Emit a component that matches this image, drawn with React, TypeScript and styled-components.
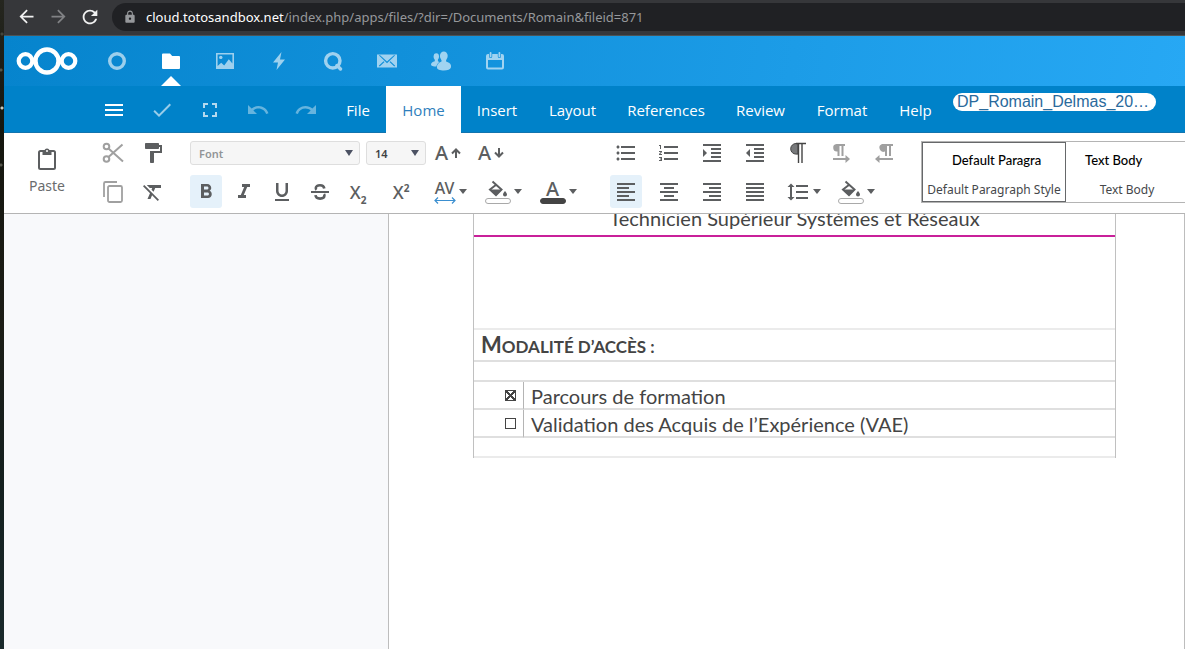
import React from "react";
import styled, { createGlobalStyle } from "styled-components";
import {
  MdArrowBack, MdArrowForward, MdRefresh, MdLock, MdMenu, MdCheck, MdUndo, MdRedo,
  MdFormatPaint, MdFormatClear, MdFormatBold, MdFormatItalic,
  MdFormatUnderlined, MdFormatListBulleted, MdFormatListNumbered,
  MdFormatIndentIncrease, MdFormatIndentDecrease, MdFormatAlignLeft, MdFormatAlignCenter,
  MdFormatAlignRight, MdFormatAlignJustify, MdFormatLineSpacing,
} from "react-icons/md";

const UI = `"Noto Sans", "Open Sans", sans-serif`;
const DOC = `Lato, "Open Sans", sans-serif`;

const GlobalStyle = createGlobalStyle`
  *, *::before, *::after { box-sizing: border-box; }
  html, body, #root { height: 100%; }
  body { margin: 0; background: #fff; font-family: ${UI}; overflow: hidden; }
  button, select, input { font: inherit; margin: 0; }
  button { border: 0; padding: 0; background: none; color: inherit; }
  svg { display: block; flex: none; }
`;

const Screen = styled.div`
  display: flex;
  min-height: 100%;
`;

const DesktopEdge = styled.div`
  flex: none;
  width: 4px;
  background:
    radial-gradient(circle at 2px 108px, #c9c9bd 0 1px, transparent 2px),
    radial-gradient(circle at 1px 70px, #54554a 0 1px, transparent 2px),
    radial-gradient(circle at 2px 34px, #44453c 0 1px, transparent 2px),
    radial-gradient(circle at 1px 165px, #55564c 0 1px, transparent 2px),
    linear-gradient(#25261f, #15160f 20%, #1c1d16 50%, #14201f 75%, #1a2a2c);
`;

const Window = styled.div`
  flex: 1;
  min-width: 0;
  display: flex;
  flex-direction: column;
  height: 100vh;
`;

const BrowserBar = styled.div`
  display: flex;
  align-items: center;
  height: 36px;
  padding: 3px 0 5px 6px;
  background: #36373a;
  border-bottom: 1px solid #4d5356;
  overflow: hidden;
`;

const BrowserButton = styled.button<{ $dim?: boolean }>`
  display: grid;
  place-items: center;
  width: 32px;
  height: 28px;
  color: ${(p) => (p.$dim ? "#818285" : "#f1f1f1")};
`;

const AddressBar = styled.label`
  flex: 1;
  display: flex;
  align-items: center;
  gap: 9px;
  height: 28px;
  margin-left: 6px;
  padding-left: 11px;
  border-radius: 14px 0 0 14px;
  background: #202124;
  color: #96989b;
  font-size: 13px;
  line-height: 28px;
  white-space: nowrap;
`;

const Host = styled.span`
  color: #fff;
`;

const AppHeader = styled.header`
  flex: none;
  display: flex;
  align-items: center;
  height: 50px;
  padding-left: 12px;
  background: linear-gradient(100deg, #0684cd, #27a8f4);
`;

const Logo = styled.a`
  display: block;
  width: 74px;
`;

const AppLink = styled.a<{ $active?: boolean }>`
  position: relative;
  display: grid;
  place-items: center;
  width: 54px;
  height: 50px;
  color: #fff;
  svg { opacity: ${(p) => (p.$active ? 1 : 0.6)}; }
  &::after {
    content: "";
    display: ${(p) => (p.$active ? "block" : "none")};
    position: absolute;
    bottom: 0;
    left: 17px;
    border: 10px solid transparent;
    border-top-width: 0;
    border-bottom-color: #fff;
  }
`;

const MenuBar = styled.nav`
  flex: none;
  display: flex;
  height: 47px;
  padding-left: 86px;
  background: #0082c9;
  box-shadow: inset 0 -1px #1274ae;
`;

const MenuIcon = styled.button<{ $fade?: number }>`
  display: grid;
  place-items: center;
  width: 48px;
  color: #fff;
  svg { opacity: ${(p) => p.$fade ?? 1}; }
`;

const Tab = styled.button<{ $active?: boolean; $w: number }>`
  width: ${(p) => p.$w}px;
  text-align: center;
  white-space: nowrap;
  font-family: "Open Sans", ${UI};
  font-size: 15px;
  line-height: 20px;
  color: ${(p) => (p.$active ? "#2f7fbd" : "#fff")};
  background: ${(p) => (p.$active ? "#fff" : "transparent")};
`;

const FileName = styled.input`
  width: 203px;
  height: 18px;
  margin: 7px 0 0 5px;
  padding: 0 4px;
  border: 0;
  border-radius: 9px;
  background: #fff;
  color: #2a6a9c;
  font-family: "Liberation Sans", sans-serif;
  font-size: 16px;
  line-height: 18px;
  text-overflow: ellipsis;
`;

const Toolbar = styled.div`
  flex: none;
  display: flex;
  height: 81px;
  padding-top: 8px;
  background: #fff;
  border-bottom: 1px solid #b4b4b4;
  color: #5c5e60;
  overflow: hidden;
`;

const PasteButton = styled.button`
  display: flex;
  flex-direction: column;
  align-items: center;
  width: 86px;
  padding-top: 6px;
  height: 64px;
  gap: 5px;
  font-size: 14px;
  line-height: 20px;
  color: #6a6c6e;
`;

const Group = styled.div<{ $w: number }>`
  flex: none;
  width: ${(p) => p.$w}px;
  display: flex;
  flex-direction: column;
  gap: 10px;
`;

const Row = styled.div<{ $gap: number }>`
  display: flex;
  align-items: center;
  gap: ${(p) => p.$gap}px;
  & > * { flex: none; }
  &:first-child { height: 24px; }
  &:last-child { height: 33px; }
`;

const Tool = styled.button<{ $w?: number; $on?: boolean; $dim?: boolean }>`
  display: flex;
  align-items: center;
  justify-content: center;
  gap: 3px;
  width: ${(p) => p.$w ?? 32}px;
  height: 100%;
  border-radius: 3px;
  background: ${(p) => (p.$on ? "#e5f1fa" : "transparent")};
  color: ${(p) => (p.$dim ? "#a0a0a0" : "#5c5e60")};
`;

const Glyph = styled.span<{ $size?: number }>`
  font-size: ${(p) => p.$size ?? 18}px;
  font-weight: 500;
  line-height: 18px;
  sub, sup { font-size: 10px; line-height: 0; font-weight: 700; }
`;

const Stack = styled.span`
  display: flex;
  flex-direction: column;
  align-items: center;
`;

const ColorBar = styled.span<{ $fill: string }>`
  width: 26px;
  height: 6px;
  border-radius: 3px;
  border: 1px solid ${(p) => (p.$fill === "#fff" ? "#a9a9a9" : p.$fill)};
  background: ${(p) => p.$fill};
`;

const SelectBox = styled.span<{ $w: number; $strong?: boolean }>`
  display: grid;
  align-items: center;
  width: ${(p) => p.$w}px;
  & > * { grid-area: 1 / 1; }
  & > svg { justify-self: end; margin-right: 7px; pointer-events: none; }
  select {
    appearance: none;
    width: 100%;
    height: 24px;
    padding: 0 8px;
    border: 1px solid #dedede;
    border-radius: 3px;
    background: #f6f6f6;
    color: ${(p) => (p.$strong ? "#3f4144" : "#929497")};
    font-size: 11px;
    font-weight: 600;
    opacity: 1;
  }
`;

const Styles = styled.div`
  flex: 1;
  min-width: 0;
  display: flex;
  height: 62px;
  border: 1px solid #b4b4b4;
  border-right: 0;
  background: #fff;
  overflow: hidden;
`;

const StyleCard = styled.button<{ $w: number; $on?: boolean; $indent: number }>`
  flex: none;
  display: flex;
  flex-direction: column;
  gap: 12px;
  width: ${(p) => p.$w}px;
  padding-top: 9px;
  box-shadow: ${(p) => (p.$on ? "inset 0 0 0 1px #66686a" : "none")};
  white-space: nowrap;
  font-size: 12px;
  line-height: 18px;
  color: #45474a;
  strong {
    align-self: flex-start;
    padding-left: ${(p) => p.$indent}px;
    font-family: ${DOC};
    font-size: 13px;
    font-weight: 500;
    color: #000;
  }
  span { align-self: center; }
`;

const Canvas = styled.main`
  flex: 1;
  min-height: 0;
  display: flex;
  padding-left: 384px;
  background: #f8f9fb;
  overflow: hidden;
`;

const Page = styled.section`
  flex: 1;
  padding: 0 68px 0 84px;
  border: solid #bdbdbd;
  border-width: 0 1px;
  background: #fff;
  color: #444;
  font-family: ${DOC};
`;

const Sheet = styled.table`
  width: 100%;
  margin-top: -8px;
  border-spacing: 0;
  border: solid #c0c0c0;
  border-width: 0 1px;
  font-size: 20px;
  line-height: 24px;
  td, th { padding: 0; border-bottom: 2px solid #dfdfdf; }
`;

const Line = styled.tr<{ $h: number; $soft?: boolean }>`
  height: ${(p) => p.$h}px;
  && > td { ${(p) => (p.$soft ? "border-bottom-color: #ebebeb;" : "")} }
`;

const TitleCell = styled.td`
  &&& { border-bottom: 2px solid #c9209a; }
  text-align: center;
  vertical-align: top;
`;

const Heading = styled.th`
  &&& { padding: 2px 0 0 7px; }
  text-align: left;
  text-transform: uppercase;
  font-size: 17px;
  font-weight: 700;
  &::first-letter { font-size: 22px; }
`;

const TickCell = styled.td`
  width: 50px;
  &&& { border-right: 1px solid #b4b4b4; padding-right: 7px; }
  text-align: right;
`;

const TextCell = styled.td`
  &&& { padding: 2px 0 0 7px; }
`;

const Tick = styled.input`
  appearance: none;
  display: block;
  && { margin: 0 0 0 auto; }
  width: 11px;
  height: 11px;
  border: 1px solid #444;
  &:checked {
    background:
      linear-gradient(45deg, transparent 44%, #444 44% 56%, transparent 56%),
      linear-gradient(-45deg, transparent 44%, #444 44% 56%, transparent 56%);
  }
`;

const Caret = () => (
  <svg width="8" height="5" viewBox="0 0 8 5" fill="currentColor"><path d="M0 0h8L4 5z" /></svg>
);
const SelectCaret = () => (
  <svg width="8" height="6" viewBox="0 0 8 6" fill="#4c5263"><path d="M0 0h8L4 6z" /></svg>
);

const CloudLogo = () => (
  <svg width="62" height="30" viewBox="0 0 62 30" fill="none" stroke="#fff">
    <circle cx="31" cy="15" r="11.5" strokeWidth="4.4" />
    <circle cx="9.5" cy="15" r="6.8" strokeWidth="4.2" />
    <circle cx="52.5" cy="15" r="6.8" strokeWidth="4.2" />
  </svg>
);

const appIcons: { name: string; active?: boolean; icon: React.ReactNode }[] = [
  { name: "Dashboard", icon: <svg width="20" height="20" fill="none" stroke="currentColor" strokeWidth="3.4"><circle cx="10" cy="10" r="7.3" /></svg> },
  { name: "Files", active: true, icon: <svg width="20" height="20" fill="currentColor"><path d="M2 2.5h7l2.2 2.4H18a1 1 0 0 1 1 1v11a1 1 0 0 1-1 1H2a1 1 0 0 1-1-1v-13.400a1 1 0 0 1 1-1z" /></svg> },
  { name: "Photos", icon: <svg width="20" height="20" fill="currentColor" fillRule="evenodd"><path d="M1 2h18v16H1zM2.600 3.600v11.400l3.600-3.200 3 2.600 4.600-6.200 3.600 4.400v-9z" /><circle cx="5.800" cy="6.400" r="1.700" /></svg> },
  { name: "Activity", icon: <svg width="20" height="20" fill="currentColor"><path d="M12.500 1 4 11.500h5L7.500 19 16 8.500h-5z" /></svg> },
  { name: "Talk", icon: <svg width="20" height="20" fill="none" stroke="currentColor"><circle cx="9.800" cy="9.800" r="7.200" strokeWidth="3.400" /><path d="M14 14.500 17.500 18" strokeWidth="3.400" strokeLinecap="round" /></svg> },
  { name: "Mail", icon: <svg width="20" height="20"><path fill="currentColor" fillRule="evenodd" d="M0 3.500h20v13H0zM2 4.500l8 7.800 8-7.800-.8-.5L10 10.600 2.800 4zM1.800 14.800l.9.800L7.500 11l-.9-.8zM18.200 14.800l-.9.800L12.500 11l.9-.8z" /></svg> },
  { name: "Contacts", icon: <svg width="20" height="20" fill="currentColor"><ellipse cx="12.800" cy="5" rx="3.900" ry="4.600" /><path d="M10.500 8h4.600v2.600c2.900.8 5 2.400 5 4.800 0 2.600-3.200 4-7.200 4s-7-1-7-3.200c0-2.400 1.700-4.800 4.600-5.600z" /><ellipse cx="5.300" cy="5.600" rx="2.700" ry="3.400" /><path d="M3.800 8h3.100v2.300l1.600.7c-2 1.300-3 3-3.100 4.600C2 15.600 0 15 0 13.600c0-1.700 1.500-2.800 3.800-3.400z" /></svg> },
  { name: "Calendar", icon: <svg width="20" height="20"><path fill="currentColor" fillRule="evenodd" d="M3 3h1v2.500a1.600 1.600 0 0 0 3.200 0V3h5.600v2.500a1.600 1.600 0 0 0 3.200 0V3h1a2 2 0 0 1 2 2v11.500a2 2 0 0 1-2 2H3a2 2 0 0 1-2-2V5a2 2 0 0 1 2-2zm0 6v7.500h14V9z" /><path stroke="currentColor" strokeWidth="1.800" strokeLinecap="round" d="M5.600 1.800v3.600M14.400 1.800v3.600" /></svg> },
];

const tabs: [string, number][] = [
  ["File", 56], ["Home", 75], ["Insert", 72], ["Layout", 79], ["References", 108],
  ["Review", 81], ["Format", 82], ["Help", 65],
];

const ExpandIcon = () => (
  <svg width="14" height="14" fill="none" stroke="currentColor" strokeWidth="2"><path d="M1 5V1h4M9 1h4v4M13 9v4H9M5 13H1V9" /></svg>
);
const ClipboardIcon = () => (
  <svg width="20" height="24" viewBox="0 0 20 24" fill="none" stroke="#5c5e60">
    <rect x="2" y="4" width="16" height="18" rx="1.500" strokeWidth="2" />
    <path d="M5.500 4h2a2.500 2.500 0 0 1 5 0h2v4h-9z" fill="#5c5e60" stroke="none" />
    <circle cx="10" cy="4" r="1" fill="#fff" stroke="none" />
  </svg>
);
const ScissorsIcon = () => (
  <svg width="22" height="22" viewBox="0 0 22 22" fill="none" stroke="currentColor" strokeWidth="2">
    <circle cx="4.500" cy="4.500" r="2.800" /><circle cx="4.500" cy="17" r="2.800" />
    <path d="M6.500 6.500 21 19.500M6.500 15 20.500 2.500" />
  </svg>
);
const CopyIcon = () => (
  <svg width="22" height="24" viewBox="0 0 22 24" fill="none" stroke="currentColor" strokeWidth="1.800">
    <path d="M2 17V3.500A1.500 1.500 0 0 1 3.500 2H15" /><rect x="6" y="6" width="14" height="16" rx="1.500" />
  </svg>
);
const ArrowUp = ({ down }: { down?: boolean }) => (
  <svg width="10" height="10" viewBox="0 0 10 10" fill="none" stroke="currentColor" strokeWidth="2">
    <path d={down ? "M5 0v8M1 4.500l4 4 4-4" : "M5 10V2M1 5.500l4-4 4 4"} />
  </svg>
);
const StrikeIcon = () => (
  <svg width="20" height="20" viewBox="0 0 20 20" fill="none" stroke="currentColor">
    <path strokeWidth="2" d="M1 10h18" />
    <path strokeWidth="2.600" d="M14.300 6.500C14 4.300 12.500 3.200 10 3.200c-2.600 0-4.200 1.100-4.200 2.900 0 .7.200 1.300.7 1.700M5.500 13.200c.2 2.200 1.900 3.400 4.600 3.400 2.600 0 4.300-1.100 4.300-3 0-.6-.1-1.100-.4-1.500" />
  </svg>
);
const SpacingArrow = () => (
  <svg width="22" height="7" viewBox="0 0 22 7" fill="none" stroke="#3b8fd0" strokeWidth="1.200">
    <path d="M1 3.500h20M4 .5l-3 3 3 3M18 .5l3 3-3 3" />
  </svg>
);
const Bucket = () => (
  <svg width="22" height="18" viewBox="0 0 22 18">
    <path d="M5.500 1.500 14.500 9.500 9 15 3 9.500 9.500 4.500" fill="none" stroke="currentColor" strokeWidth="2" />
    <path d="M3 9.500h12L9 15.500z" fill="currentColor" />
    <path d="M18 11c1.200 1.500 2 2.500 2 3.500a2 2 0 0 1-4 0c0-1 .8-2 2-3.500z" fill="currentColor" />
  </svg>
);
const Pilcrow = () => (
  <svg width="18" height="22" viewBox="0 0 18 22">
    <path d="M9 1.500H7a5.300 5.300 0 0 0 0 10.600h2z" fill="#77797b" stroke="#444" strokeWidth="1" />
    <path d="M7 1.500h10M9.500 1.500V21M13 1.500V21" fill="none" stroke="#444" strokeWidth="1.400" />
  </svg>
);
const Direction = ({ rtl }: { rtl?: boolean }) => (
  <svg width="18" height="20" viewBox="0 0 18 20" fill="currentColor">
    <path d={rtl ? "M7 1h11v2h-2v10h-2V3h-2v10h-2V8.500a3.750 3.750 0 0 1-3-7.500z" : "M4.500 1H13v2h-1.500v10h-2V3h-2v10h-2V8.500A3.750 3.750 0 0 1 4.500 1z"} />
    <path d={rtl ? "M4.500 12v3H18v2H4.500v3L0 16z" : "M13.500 12v3H1v2h12.500v3L18 16z"} />
  </svg>
);

export default function App() {
  return (
    <Screen>
      <GlobalStyle />
      <DesktopEdge />
      <Window>
        <BrowserBar>
          <BrowserButton aria-label="Back"><MdArrowBack size={21} /></BrowserButton>
          <BrowserButton aria-label="Forward" $dim><MdArrowForward size={21} /></BrowserButton>
          <BrowserButton aria-label="Reload"><MdRefresh size={22} /></BrowserButton>
          <AddressBar>
            <MdLock size={14} />
            <span><Host>cloud.totosandbox.net</Host>/index.php/apps/files/?dir=/Documents/Romain&amp;fileid=871</span>
          </AddressBar>
        </BrowserBar>

        <AppHeader>
          <Logo href="#" aria-label="Home"><CloudLogo /></Logo>
          {appIcons.map((a) => (
            <AppLink key={a.name} href="#" aria-label={a.name} $active={a.active}>{a.icon}</AppLink>
          ))}
        </AppHeader>

        <MenuBar>
          <MenuIcon aria-label="Menu"><MdMenu size={24} /></MenuIcon>
          <MenuIcon aria-label="Save" $fade={0.6}><MdCheck size={24} /></MenuIcon>
          <MenuIcon aria-label="Fullscreen" $fade={0.7}><ExpandIcon /></MenuIcon>
          <MenuIcon aria-label="Undo" $fade={0.4}><MdUndo size={24} /></MenuIcon>
          <MenuIcon aria-label="Redo" $fade={0.4}><MdRedo size={24} /></MenuIcon>
          {tabs.map(([name, w]) => (
            <Tab key={name} $w={w} $active={name === "Home"}>{name}</Tab>
          ))}
          <FileName aria-label="File name" defaultValue="DP_Romain_Delmas_20…" />
        </MenuBar>

        <Toolbar>
          <PasteButton><ClipboardIcon />Paste</PasteButton>
          <Group $w={100}>
            <Row $gap={0}>
              <Tool aria-label="Cut" $dim $w={46}><ScissorsIcon /></Tool>
              <Tool aria-label="Clone formatting" $w={34}><MdFormatPaint size={24} /></Tool>
            </Row>
            <Row $gap={0}>
              <Tool aria-label="Copy" $dim $w={46}><CopyIcon /></Tool>
              <Tool aria-label="Clear formatting" $w={34}><MdFormatClear size={24} /></Tool>
            </Row>
          </Group>

          <Group $w={420}>
            <Row $gap={6}>
              <SelectBox $w={170}>
                <select aria-label="Font name"><option>Font</option></select>
                <SelectCaret />
              </SelectBox>
              <SelectBox $w={60} $strong>
                <select aria-label="Font size"><option>14</option></select>
                <SelectCaret />
              </SelectBox>
              <Tool aria-label="Grow font"><Glyph $size={20}>A</Glyph><ArrowUp /></Tool>
              <Tool aria-label="Shrink font" $w={42}><Glyph $size={20}>A</Glyph><ArrowUp down /></Tool>
            </Row>
            <Row $gap={6}>
              <Tool aria-label="Bold" $on><MdFormatBold size={24} /></Tool>
              <Tool aria-label="Italic"><MdFormatItalic size={24} /></Tool>
              <Tool aria-label="Underline"><MdFormatUnderlined size={24} /></Tool>
              <Tool aria-label="Strikethrough"><StrikeIcon /></Tool>
              <Tool aria-label="Subscript"><Glyph>X<sub>2</sub></Glyph></Tool>
              <Tool aria-label="Superscript" $w={42}><Glyph>X<sup>2</sup></Glyph></Tool>
              <Tool aria-label="Character spacing" $w={44}>
                <Stack><Glyph $size={16}>AV</Glyph><SpacingArrow /></Stack><Caret />
              </Tool>
              <Tool aria-label="Highlight colour" $w={50}>
                <Stack><Bucket /><ColorBar $fill="#fff" /></Stack><Caret />
              </Tool>
              <Tool aria-label="Font colour" $w={48}>
                <Stack><Glyph $size={20}>A</Glyph><ColorBar $fill="#444" /></Stack><Caret />
              </Tool>
            </Row>
          </Group>

          <Group $w={311}>
            <Row $gap={11}>
              <Tool aria-label="Bulleted list"><MdFormatListBulleted size={24} /></Tool>
              <Tool aria-label="Numbered list"><MdFormatListNumbered size={24} /></Tool>
              <Tool aria-label="Increase indent"><MdFormatIndentIncrease size={24} /></Tool>
              <Tool aria-label="Decrease indent"><MdFormatIndentDecrease size={24} /></Tool>
              <Tool aria-label="Formatting marks"><Pilcrow /></Tool>
              <Tool aria-label="Left to right" $dim><Direction /></Tool>
              <Tool aria-label="Right to left" $dim><Direction rtl /></Tool>
            </Row>
            <Row $gap={11}>
              <Tool aria-label="Align left" $on><MdFormatAlignLeft size={24} /></Tool>
              <Tool aria-label="Align centre"><MdFormatAlignCenter size={24} /></Tool>
              <Tool aria-label="Align right"><MdFormatAlignRight size={24} /></Tool>
              <Tool aria-label="Justify"><MdFormatAlignJustify size={24} /></Tool>
              <Tool aria-label="Line spacing" $w={42}><MdFormatLineSpacing size={24} /><Caret /></Tool>
              <Tool aria-label="Background colour" $w={42}>
                <Stack><Bucket /><ColorBar $fill="#fff" /></Stack><Caret />
              </Tool>
            </Row>
          </Group>

          <Styles>
            <StyleCard $w={144} $on $indent={30}><strong>Default Paragra</strong><span>Default Paragraph Style</span></StyleCard>
            <StyleCard $w={122} $indent={19}><strong>Text Body</strong><span>Text Body</span></StyleCard>
          </Styles>
        </Toolbar>

        <Canvas>
          <Page>
            <Sheet>
              <tbody>
                <Line $h={31}><TitleCell colSpan={2}>Technicien Supérieur Systèmes et Réseaux</TitleCell></Line>
                <Line $h={93} $soft><td colSpan={2} /></Line>
                <Line $h={32}><Heading colSpan={2}>Modalité d’accès :</Heading></Line>
                <Line $h={20}><td colSpan={2} /></Line>
                <Line $h={28}>
                  <TickCell><Tick type="checkbox" id="parcours" defaultChecked /></TickCell>
                  <TextCell><label htmlFor="parcours">Parcours de formation</label></TextCell>
                </Line>
                <Line $h={28}>
                  <TickCell><Tick type="checkbox" id="vae" /></TickCell>
                  <TextCell><label htmlFor="vae">Validation des Acquis de l’Expérience (VAE)</label></TextCell>
                </Line>
                <Line $h={20} $soft><td colSpan={2} /></Line>
              </tbody>
            </Sheet>
          </Page>
        </Canvas>
      </Window>
    </Screen>
  );
}
